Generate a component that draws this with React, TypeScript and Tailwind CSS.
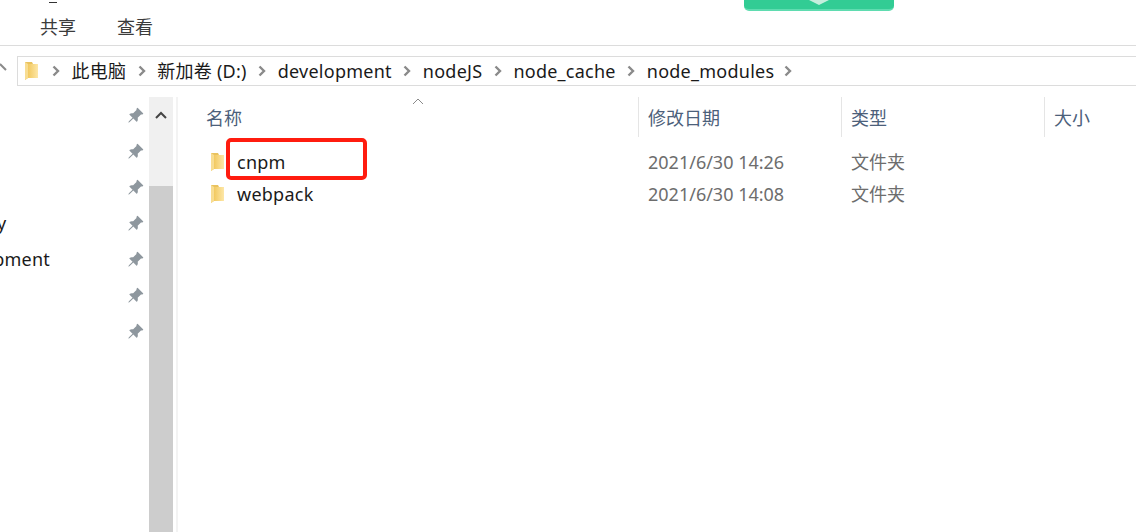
import { BsPinAngleFill } from "react-icons/bs";

const crumbs = ["此电脑", "新加卷 (D:)", "development", "nodeJS", "node_cache", "node_modules"];
const files = [
  { name: "cnpm", date: "2021/6/30 14:26", type: "文件夹" },
  { name: "webpack", date: "2021/6/30 14:08", type: "文件夹" },
];
const font = "font-['Noto_Sans','Noto_Sans_CJK_SC',sans-serif]";

function Chevron() {
  return (
    <svg width="8" height="12" viewBox="0 0 8 12" className="shrink-0">
      <path d="M1.5 1.5 L6 6 L1.5 10.5" fill="none" stroke="#8a8a8a" strokeWidth="2.4" />
    </svg>
  );
}

function Folder() {
  return (
    <svg width="14" height="20" viewBox="0 0 14 20" className="shrink-0">
      <defs>
        <linearGradient id="folder-front" x1="0" y1="0" x2="1" y2="0">
          <stop offset="0" stopColor="#f2c960" />
          <stop offset="1" stopColor="#fde7a8" />
        </linearGradient>
      </defs>
      <path d="M1 1 H8 L9 3 V17 H4 L1 19 Z" fill="#e9c25e" />
      <path d="M4 3 H14 V17 H4 Z" fill="url(#folder-front)" />
      <path d="M1 1 V19 L4 17 V3 Z" fill="#f8dd92" />
    </svg>
  );
}

export default function App() {
  return (
    <div className={`relative h-[532px] w-[1136px] overflow-hidden bg-white ${font}`}>
      {/* Green widget cut off by the top edge */}
      <div className="absolute left-[744px] top-0 flex h-[11px] w-[150px] justify-center rounded-b-[5px] border-b-2 border-[#5fdcb0] bg-[#32cc94]">
        <svg width="24" height="5" viewBox="0 0 24 5">
          <path d="M2 0 H22 L12 5 Z" fill="#c5eedd" />
        </svg>
      </div>
      <div className="absolute left-[49px] top-[2px] h-px w-[8px] bg-[#333]" />

      {/* Ribbon tabs */}
      <div className="flex h-[46px] items-center gap-[41px] border-b border-[#dcdcdc] pl-[40px] pt-[8px] text-[18px] leading-none text-[#3b3b3b]">
        <span>共享</span>
        <span>查看</span>
      </div>

      {/* Address bar */}
      <div className="flex items-center pt-[10px]">
        <svg width="17" height="30" viewBox="0 0 17 30" className="shrink-0">
          <path d="M0 8 L6 14" stroke="#8a8a8a" strokeWidth="2" />
        </svg>
        <div className="flex h-[30px] flex-1 items-center border-y border-l border-[#dcdcdc] pl-[6px] text-[18px] tracking-[0.25px] text-[#1a1a1a]">
          <Folder />
          <div className="ml-[14px] flex items-center gap-[11.5px]">
            {crumbs.map((c) => (
              <div key={c} className="flex items-center gap-[11.5px]">
                <Chevron />
                <span className="whitespace-nowrap leading-none">{c}</span>
              </div>
            ))}
            <div className="-ml-[2px]">
              <Chevron />
            </div>
          </div>
        </div>
      </div>

      <div className="mt-[11px] flex h-[435px]">
        {/* Navigation pane */}
        <div className="w-[149px] shrink-0 overflow-hidden">
          {["", "", "", "y", "development", "", ""].map((label, i) => (
            <div key={i} className="flex h-[36px] items-center justify-between pr-[5px]">
              <span className={`mt-[1px] whitespace-nowrap text-[18px] tracking-[0.25px] text-[#1a1a1a] ${label === "development" ? "-ml-[64px]" : ""} ${label === "y" ? "-ml-[3px]" : ""}`}>
                {label}
              </span>
              <BsPinAngleFill size={17} className="shrink-0 text-[#8e979e]" />
            </div>
          ))}
        </div>

        {/* Scrollbar */}
        <div className="flex w-[24px] shrink-0 flex-col bg-[#f0f0f0]">
          <div className="flex h-[36px] items-center justify-center">
            <svg width="12" height="8" viewBox="0 0 12 8">
              <path d="M1 7 L6 2 L11 7" fill="none" stroke="#444" strokeWidth="2" />
            </svg>
          </div>
          <div className="mt-[53px] flex-1 bg-[#cdcdcd]" />
        </div>

        {/* File list */}
        <div className="ml-[3px] flex-1 border-l-2 border-[#f3f3f3] pl-[27px]">
          <div className="relative flex h-[40px] pt-[2px] text-[18px] text-[#4c607a]">
            <svg width="12" height="7" viewBox="0 0 12 7" className="absolute left-[207px] top-[1px]">
              <path d="M1 6 L6 1 L11 6" fill="none" stroke="#8a8a8a" strokeWidth="1" />
            </svg>
            <div className="flex w-[433px] items-center pl-[1px] leading-none">名称</div>
            <div className="-mt-[2px] flex w-[203px] items-center border-l border-[#e5e5e5] pl-[9px] pt-[2px] leading-none">修改日期</div>
            <div className="-mt-[2px] flex w-[203px] items-center border-l border-[#e5e5e5] pl-[9px] pt-[2px] leading-none">类型</div>
            <div className="-mt-[2px] flex flex-1 items-center border-l border-[#e5e5e5] pl-[9px] pt-[2px] leading-none">大小</div>
          </div>
          <div className="mt-[9px] text-[18px]">
            {files.map((f) => (
              <div key={f.name} className="flex h-[32px] items-center">
                <div className="flex w-[433px] items-center pl-[5px] tracking-[0.25px] text-[#1a1a1a]">
                  <Folder />
                  <span className="ml-[13px] leading-none">{f.name}</span>
                </div>
                <div className="w-[203px] pl-[10px] leading-none text-[#6d6d6d]">{f.date}</div>
                <div className="pl-[10px] leading-none text-[#6d6d6d]">{f.type}</div>
              </div>
            ))}
          </div>
        </div>
      </div>

      {/* Red annotation box */}
      <div className="absolute left-[226px] top-[138px] h-[42px] w-[141px] rounded-[5px] border-[4px] border-[#ff1c0f]" />
    </div>
  );
}
